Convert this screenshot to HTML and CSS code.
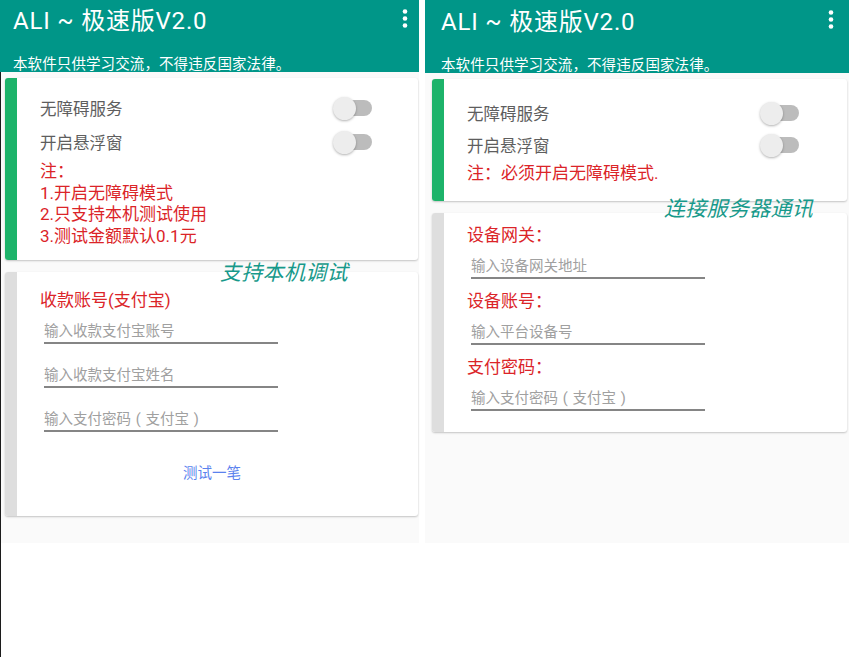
FILE: index.html
```html
<!DOCTYPE html>
<html lang="zh-CN">
<head>
<meta charset="utf-8">
<title>ALI ~ 极速版V2.0</title>
<link rel="stylesheet" href="styles.css">
</head>
<body>
  <section class="screen screen-a">
    <header class="appbar">
      <div class="appbar-top">
        <span class="title">ALI ~ 极速版V2.0</span>
        <svg class="menu" width="6" height="20" viewBox="0 0 6 20"><circle cx="3" cy="2.5" r="2.3"/><circle cx="3" cy="9.5" r="2.3"/><circle cx="3" cy="16.5" r="2.3"/></svg>
      </div>
      <div class="subtitle">本软件只供学习交流，不得违反国家法律。</div>
    </header>
    <div class="stage">
      <main class="content">
        <div class="card">
          <div class="stripe stripe-green"></div>
          <div class="card-body body-a1">
            <div class="row"><span>无障碍服务</span><span class="switch"></span></div>
            <div class="row"><span>开启悬浮窗</span><span class="switch"></span></div>
            <div class="notes">
              <div>注：</div>
              <div>1.开启无障碍模式</div>
              <div>2.只支持本机测试使用</div>
              <div>3.测试金额默认0.1元</div>
            </div>
          </div>
        </div>
        <div class="card">
          <div class="stripe stripe-gray"></div>
          <div class="card-body body-a2">
            <div class="label">收款账号(支付宝)</div>
            <div class="field">输入收款支付宝账号</div>
            <div class="field">输入收款支付宝姓名</div>
            <div class="field">输入支付密码<span class="paren">(</span>支付宝<span class="paren">)</span></div>
            <div class="action">测试一笔</div>
          </div>
        </div>
        <div class="tag tag-a">支持本机调试</div>
      </main>
    </div>
  </section>

  <section class="screen screen-b">
    <header class="appbar">
      <div class="appbar-top">
        <span class="title">ALI ~ 极速版V2.0</span>
        <svg class="menu" width="6" height="20" viewBox="0 0 6 20"><circle cx="3" cy="2.5" r="2.3"/><circle cx="3" cy="9.5" r="2.3"/><circle cx="3" cy="16.5" r="2.3"/></svg>
      </div>
      <div class="subtitle">本软件只供学习交流，不得违反国家法律。</div>
    </header>
    <div class="stage">
      <main class="content">
        <div class="card">
          <div class="stripe stripe-green"></div>
          <div class="card-body body-b1">
            <div class="row"><span>无障碍服务</span><span class="switch"></span></div>
            <div class="row"><span>开启悬浮窗</span><span class="switch"></span></div>
            <div class="notes">注：必须开启无障碍模式.</div>
          </div>
        </div>
        <div class="card">
          <div class="stripe stripe-gray"></div>
          <div class="card-body body-b2">
            <div class="label">设备网关：</div>
            <div class="field">输入设备网关地址</div>
            <div class="label">设备账号：</div>
            <div class="field">输入平台设备号</div>
            <div class="label">支付密码：</div>
            <div class="field">输入支付密码<span class="paren">(</span>支付宝<span class="paren">)</span></div>
          </div>
        </div>
        <div class="tag tag-b">连接服务器通讯</div>
      </main>
    </div>
  </section>
</body>
</html>
```

FILE: styles.css
```css
* { box-sizing: border-box; }

body {
  margin: 0;
  background: #ffffff;
  font-family: Roboto, "Noto Sans CJK SC", sans-serif;
  display: flex;
  align-items: flex-start;
  height: 657px;
  overflow: hidden;
}

.screen {
  display: flex;
  flex-direction: column;
  height: 657px;
}
.screen-a { width: 419px; }
.screen-b { width: 424px; margin-left: 6px; }

.appbar {
  background: #009688;
  color: #ffffff;
  flex: none;
  display: flex;
  flex-direction: column;
}
.screen-a .appbar { height: 72px; padding-left: 13px; padding-right: 11px; }
.screen-b .appbar { height: 73px; padding-left: 16px; padding-right: 15px; }

.appbar-top {
  display: flex;
  justify-content: space-between;
  align-items: flex-start;
  margin-top: 7px;
}
.screen-b .appbar-top { margin-top: 8px; }

.title {
  font-size: 24px;
  line-height: 28px;
  letter-spacing: 0.8px;
}
.menu { margin-top: 2px; fill: #ffffff; flex: none; }

.subtitle {
  font-size: 14.5px;
  line-height: 16px;
  margin-top: 22px;
  letter-spacing: 0.1px;
}

.stage {
  flex: 1;
  display: flex;
  flex-direction: column;
}
.screen-a .stage { border-left: 1px solid #1c1c1c; }

.content {
  position: relative;
  background: #fafafa;
  padding-top: 6px;
}
.screen-a .content { height: 471px; padding-left: 4px; padding-right: 1px; }
.screen-b .content { height: 470px; padding-left: 7px; padding-right: 2px; }

.card {
  display: flex;
  background: #ffffff;
  border-radius: 3px;
  box-shadow: 0 1px 2px rgba(0, 0, 0, 0.22);
  overflow: hidden;
}
.card + .card { margin-top: 12px; }

.stripe { width: 12px; flex: none; }
.stripe-green { background: #1db36a; }
.stripe-gray { background: #dedede; }

.card-body { flex: 1; }
.body-a1 { padding: 13px 46px 13px 23px; }
.body-b1 { padding: 18px 48px 17px 23px; }
.body-a2 { padding: 17px 23px 32px 23px; }
.body-b2 { padding: 11px 23px 21px 23px; }

.row {
  display: flex;
  justify-content: space-between;
  align-items: center;
  height: 34px;
  font-size: 16.5px;
  color: #5e5e5e;
}
.body-b1 .row { height: 32px; }

.notes {
  color: #db2428;
  font-size: 17px;
  line-height: 21.5px;
  margin-top: 2px;
}
.body-b1 .notes { line-height: 22px; margin-top: 1px; }

.switch {
  position: relative;
  width: 39px;
  height: 23px;
  flex: none;
}
.switch::before {
  content: "";
  position: absolute;
  right: 0;
  top: 3.5px;
  width: 34px;
  height: 16px;
  border-radius: 8px;
  background: #bcbcbc;
}
.switch::after {
  content: "";
  position: absolute;
  left: 0;
  top: 0;
  width: 23px;
  height: 23px;
  border-radius: 50%;
  background: #ededed;
  box-shadow: 0 1px 2.5px rgba(0, 0, 0, 0.3);
}

.label {
  color: #db2428;
  font-size: 17px;
  line-height: 22px;
}

.field {
  margin-left: 4px;
  width: 234px;
  font-size: 14.5px;
  line-height: 21px;
  color: #a0a0a0;
  border-bottom: 2px solid #858585;
}
.paren {
  display: inline-block;
  width: 1em;
  text-align: center;
}
.label + .field { margin-top: 10px; }
.field + .field { margin-top: 21px; }
.field + .label { margin-top: 11px; }

.action {
  text-align: center;
  color: #5b82ee;
  font-size: 14.5px;
  line-height: 20px;
  margin-top: 32px;
  padding-right: 11px;
}

.tag {
  position: absolute;
  z-index: 1;
  font-style: italic;
  font-size: 21px;
  line-height: 24px;
  color: #17998a;
  white-space: nowrap;
  letter-spacing: 0.3px;
}
.tag-a { left: 219px; top: 189px; }
.tag-b { left: 239px; top: 124px; }
```
